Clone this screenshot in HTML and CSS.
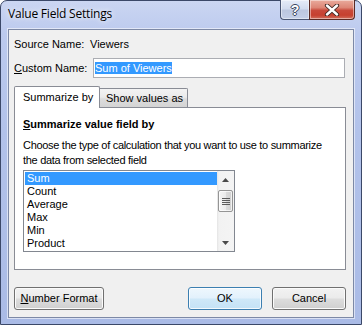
FILE: index.html
```html
<!DOCTYPE html>
<html>
<head>
<meta charset="utf-8">
<title>Value Field Settings</title>
<link rel="stylesheet" href="styles.css">
</head>
<body>
<div class="window">
  <div class="titlebar">
    <span class="title">Value Field Settings</span>
    <div class="caption-btns">
      <div class="cap help"><span class="q">?</span></div>
      <div class="cap close">
        <svg width="16" height="12" viewBox="0 0 16 12"><path d="M3 1.5 L13 10.5 M13 1.5 L3 10.5" stroke="#3a2420" stroke-width="4.2" stroke-linecap="round" fill="none"/><path d="M3 1.5 L13 10.5 M13 1.5 L3 10.5" stroke="#ffffff" stroke-width="2.4" stroke-linecap="round" fill="none"/></svg>
      </div>
    </div>
  </div>
  <div class="client">
    <div class="row source"><span class="lbl-source">Source Name:</span><span>Viewers</span></div>
    <div class="row custom"><span class="lbl-custom"><u>C</u>ustom Name:</span><div class="input"><span class="sel">Sum of Viewers</span></div></div>
    <div class="tabs">
      <div class="tab active">Summarize by</div>
      <div class="tab inactive">Show values as</div>
    </div>
    <div class="panel">
      <div class="heading"><u>S</u>ummarize value field by</div>
      <p class="desc">Choose the type of calculation that you want to use to summarize<br>the data from selected field</p>
      <div class="listbox">
        <ul class="items">
          <li class="selected">Sum</li>
          <li>Count</li>
          <li>Average</li>
          <li>Max</li>
          <li>Min</li>
          <li>Product</li>
        </ul>
        <div class="scrollbar">
          <div class="sb-btn"><svg width="7" height="4" viewBox="0 0 7 4"><path d="M0 4 L3.5 0 L7 4 Z" fill="#4a4a4a"/></svg></div>
          <div class="thumb"><svg width="8" height="7" viewBox="0 0 8 7"><path d="M0 0.5H8M0 2.5H8M0 4.5H8M0 6.5H8" stroke="#5a5a5a" stroke-width="1"/></svg></div>
          <div class="sb-btn down"><svg width="7" height="4" viewBox="0 0 7 4"><path d="M0 0 L7 0 L3.5 4 Z" fill="#4a4a4a"/></svg></div>
        </div>
      </div>
    </div>
    <div class="buttons">
      <button class="btn numfmt"><u>N</u>umber Format</button>
      <button class="btn ok">OK</button>
      <button class="btn cancel">Cancel</button>
    </div>
  </div>
</div>
</body>
</html>
```
FILE: styles.css
```css
* { box-sizing: border-box; }
html, body { margin: 0; padding: 0; }
body {
  width: 362px;
  height: 325px;
  overflow: hidden;
  background: #ffffff;
  font-family: "Liberation Sans", Arial, sans-serif;
  font-size: 11px;
  color: #000;
}
.window {
  width: 362px;
  height: 325px;
  border: 1px solid #3b4868;
  border-radius: 7px 7px 0 0;
  background: linear-gradient(180deg, #cbd6f2 0%, #bccaee 10%, #b2c2ea 40%, #aabbe6 100%);
  display: flex;
  flex-direction: column;
}
.titlebar {
  height: 28px;
  flex: none;
  display: flex;
  align-items: flex-start;
  padding-left: 7px;
}
.title {
  font-family: "Open Sans", "Noto Sans", sans-serif;
  font-size: 12px;
  line-height: 16px;
  margin-top: 5px;
  letter-spacing: -0.2px;
  color: #000;
  text-shadow: 0 0 5px rgba(255,255,255,0.9), 0 0 9px rgba(255,255,255,0.6);
}
.caption-btns {
  margin-left: auto;
  margin-right: 6px;
  margin-top: -1px;
  display: flex;
}
.cap {
  height: 20px;
  display: flex;
  align-items: center;
  justify-content: center;
  border: 1px solid #4a5674;
  border-top: none;
  box-shadow: inset 0 0 0 1px rgba(255,255,255,0.45);
}
.help {
  width: 29px;
  border-right: none;
  border-radius: 0 0 0 4px;
  background: linear-gradient(180deg, #e6ecf8 0%, #d3dcef 45%, #bcc7e0 55%, #c4cfe8 100%);
}
.q {
  font-family: "Liberation Sans", Arial, sans-serif;
  font-weight: bold;
  font-size: 14px;
  line-height: 14px;
  color: #fff;
  text-shadow: -1px 0 #3b4660, 1px 0 #3b4660, 0 -1px #3b4660, 0 1px #3b4660;
}
.close {
  width: 46px;
  border-color: #5a2a24;
  border-radius: 0 0 4px 0;
  background: linear-gradient(180deg, #e9ab9d 0%, #dd8676 40%, #c8493a 55%, #c6402f 80%, #d0705e 100%);
}
.close svg { display: block; }

.client {
  flex: none;
  margin: 0 6px 0 7px;
  width: 346px;
  border: 1px solid #7d89a6;
  box-shadow: 0 0 0 1px rgba(255,255,255,0.55);
  background: #f0f0f0;
  padding: 8px 7px 7px 5px;
}
.row {
  display: flex;
  align-items: center;
  line-height: 13px;
}
.lbl-source { width: 76px; }
.custom { margin-top: 7px; height: 20px; }
.lbl-custom { width: 79px; }
.input {
  width: 252px;
  height: 20px;
  border: 1px solid #abadb3;
  background: #fff;
  padding: 2px 1px 0 1px;
}
.sel {
  display: inline-block;
  background: #3399ff;
  color: #fff;
  line-height: 12px;
  margin-top: 1px;
}
.tabs {
  margin-top: 8px;
  height: 21px;
  display: flex;
  align-items: flex-end;
  position: relative;
  z-index: 1;
}
.tab {
  border: 1px solid #898c95;
  border-bottom: none;
  line-height: 13px;
  white-space: nowrap;
}
.tab.active {
  width: 86px;
  height: 22px;
  margin-bottom: -1px;
  background: #fff;
  padding: 4px 0 0 8px;
  border-radius: 2px 2px 0 0;
  position: relative;
  z-index: 2;
}
.tab.inactive {
  width: 89px;
  height: 19px;
  margin-left: -1px;
  padding: 3px 0 0 6px;
  border-radius: 0 2px 0 0;
  background: linear-gradient(180deg, #f3f3f3 0%, #ebebeb 45%, #dcdcdc 55%, #d4d4d4 100%);
}
.panel {
  height: 163px;
  border: 1px solid #898c95;
  background: #fff;
  padding: 10px 8px 0 8px;
}
.heading {
  font-weight: bold;
  line-height: 13px;
}
.desc {
  margin: 7px 0 0 0;
  line-height: 15px;
  white-space: nowrap;
  letter-spacing: -0.3px;
}
.listbox {
  margin-top: 2px;
  width: 212px;
  height: 82px;
  border: 1px solid #828790;
  background: #fff;
  display: flex;
}
.items {
  list-style: none;
  margin: 0;
  padding: 1px 0 0 1px;
  flex: 1;
}
.items li {
  line-height: 13px;
  padding-left: 2px;
}
.items li.selected {
  background: #3399ff;
  color: #fff;
}
.scrollbar {
  width: 17px;
  display: flex;
  flex-direction: column;
  background: linear-gradient(90deg, #e4e4e4 0px, #f2f2f2 2px, #f4f4f4 100%);
}
.sb-btn {
  height: 17px;
  display: flex;
  align-items: center;
  justify-content: center;
}
.sb-btn svg { display: block; }
.sb-btn.down { margin-top: auto; }
.thumb {
  margin: 2px 1px 0 1px;
  height: 22px;
  border: 1px solid #959595;
  border-radius: 2px;
  background: linear-gradient(90deg, #f4f4f4 0%, #eaeaea 50%, #dadada 55%, #d0d0d0 100%);
  box-shadow: inset 0 0 0 1px rgba(255,255,255,0.7);
  display: flex;
  align-items: center;
  justify-content: center;
}
.thumb svg { display: block; }
.buttons {
  display: flex;
  margin-top: 17px;
  gap: 10px;
}
.btn {
  height: 23px;
  border: 1px solid #707070;
  border-radius: 3px;
  background: linear-gradient(180deg, #f2f2f2 0%, #ebebeb 48%, #dddddd 52%, #cfcfcf 100%);
  box-shadow: inset 0 0 0 1px #fbfbfb;
  font-family: "Liberation Sans", Arial, sans-serif;
  font-size: 11px;
  line-height: 13px;
  color: #000;
  padding: 0;
  text-align: center;
}
.numfmt { width: 90px; }
.ok {
  width: 74px;
  margin-left: auto;
  border-color: #3c7fb1;
  background: linear-gradient(180deg, #eef7fd 0%, #e2f1fc 48%, #cfe8f8 52%, #c4e2f6 100%);
  box-shadow: inset 0 0 0 1px rgba(255,255,255,0.8);
}
.cancel { width: 74px; }
```
